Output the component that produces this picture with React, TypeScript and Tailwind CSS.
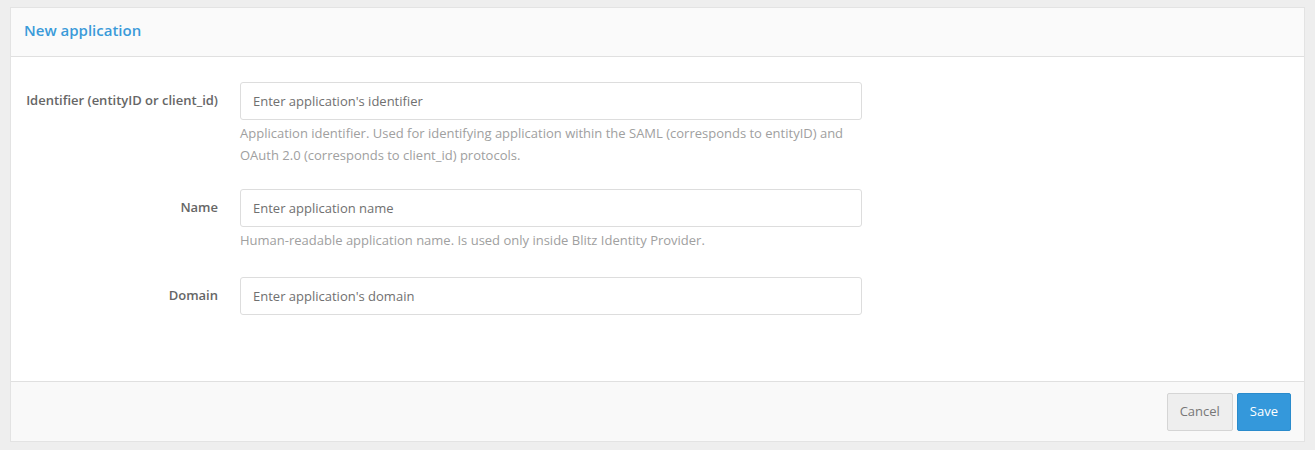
import React from 'react';

interface Field {
  label: string;
  placeholder: string;
  help?: string[];
  gap: string;
}

const fields: Field[] = [
  {
    label: 'Identifier (entityID or client_id)',
    placeholder: "Enter application's identifier",
    help: [
      'Application identifier. Used for identifying application within the SAML (corresponds to entityID) and',
      'OAuth 2.0 (corresponds to client_id) protocols.',
    ],
    gap: 'mb-[23px]',
  },
  {
    label: 'Name',
    placeholder: 'Enter application name',
    help: ['Human-readable application name. Is used only inside Blitz Identity Provider.'],
    gap: 'mb-[26px]',
  },
  {
    label: 'Domain',
    placeholder: "Enter application's domain",
    gap: 'mb-0',
  },
];

const App = () => {
  return (
    <div className="w-[1315px] h-[450px] bg-[#eeeeee] pt-[7px] px-[10px] font-['Open_Sans',sans-serif]">
      <div className="bg-white border border-[#e3e3e3] flex flex-col h-[435px]">
        {/* Header */}
        <div className="h-[49px] bg-[#fafafa] border-b border-[#e0e0e0] flex items-center px-[13px] pb-[4px]">
          <h2 className="text-[15px] font-semibold text-[#3a9ad9]">New application</h2>
        </div>

        {/* Form */}
        <div className="flex-1 pt-[25px]">
          {fields.map((field) => (
            <div key={field.label} className={`flex ${field.gap}`}>
              <div className="w-[207px] shrink-0 h-[38px] flex items-center justify-end">
                <label className="text-[13px] font-semibold text-[#666666]">{field.label}</label>
              </div>
              <div className="w-[622px] ml-[22px]">
                <input
                  type="text"
                  placeholder={field.placeholder}
                  className="w-full h-[38px] border border-[#dddddd] rounded-[3px] px-[12px] text-[13px] text-[#555] placeholder:text-[#707070] outline-none"
                />
                {field.help && (
                  <div className="mt-[2px] text-[13px] leading-[22px] text-[#a0a0a0]">
                    {field.help.map((line) => (
                      <p key={line} className="h-[22px]">{line}</p>
                    ))}
                  </div>
                )}
              </div>
            </div>
          ))}
        </div>

        {/* Footer */}
        <div className="h-[60px] bg-[#f9f9f9] border-t border-[#e0e0e0] flex items-center justify-end gap-[4px] pr-[13px]">
          <button className="h-[38px] px-[12px] bg-[#eeeeee] border border-[#d5d5d5] rounded-[2px] text-[13px] text-[#777777]">
            Cancel
          </button>
          <button className="h-[38px] px-[12px] bg-[#3498db] border border-[#2a8bcc] rounded-[2px] text-[13px] text-white">
            Save
          </button>
        </div>
      </div>
    </div>
  );
};

export default App;
